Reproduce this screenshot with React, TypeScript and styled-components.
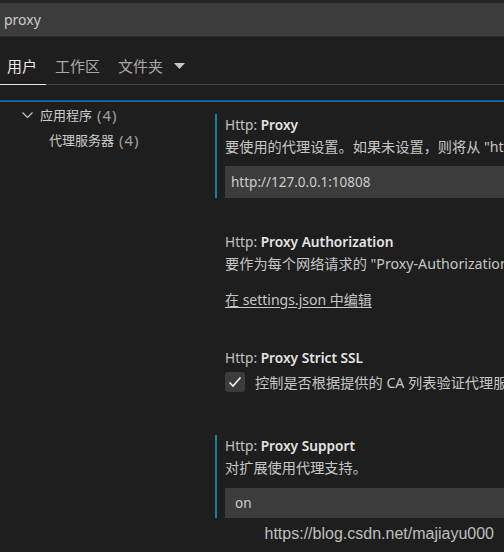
import React from 'react'
import styled, { createGlobalStyle } from 'styled-components'

const GlobalStyle = createGlobalStyle`
  html, body {
    margin: 0;
    padding: 0;
    background: #1e1e1e;
  }
  body {
    font-family: "Noto Sans", "Noto Sans CJK SC", sans-serif;
    color: #cccccc;
    overflow: hidden;
  }
`

const StyledPage = styled.div`
  position: relative;
  width: 504px;
  height: 552px;
  overflow: hidden;
  background: #1e1e1e;
`

const StyledTopStrip = styled.div`
  height: 3px;
  background: #252526;
`

const StyledSearch = styled.div`
  height: 33px;
  display: flex;
  align-items: center;
  padding-left: 4px;
  background: #3c3c3c;
  border-bottom: 1px solid #2a2a2a;
  font-size: 14px;
  color: #cccccc;
`

const StyledTabBar = styled.div`
  height: 47px;
  display: flex;
  align-items: flex-end;
  border-bottom: 1px solid #454545;
`

interface TabProps {
  $active?: boolean;
  $first?: boolean;
}

const StyledTab = styled.div<TabProps>`
  display: flex;
  align-items: center;
  height: 37px;
  padding: 0 9px 0 ${props => (props.$first ? '7px' : '9px')};
  margin-bottom: -1px;
  border-bottom: 1px solid ${props => (props.$active ? '#e7e7e7' : 'transparent')};
  font-size: 15px;
  color: ${props => (props.$active ? '#e7e7e7' : '#a9a9a9')};
`

const StyledCaret = styled.svg`
  margin-left: 11px;
`

const StyledFocusLine = styled.div`
  margin-top: 15px;
  height: 2px;
  background: linear-gradient(#0f4f85, #1c74c2);
`

const StyledBody = styled.div`
  display: flex;
`

const StyledToc = styled.div`
  width: 215px;
  flex-shrink: 0;
`

interface TocRowProps {
  $indent: number;
}

const StyledTocRow = styled.div<TocRowProps>`
  display: flex;
  align-items: center;
  height: 25px;
  padding-left: ${props => props.$indent}px;
  font-size: 13px;
  color: #cccccc;
  white-space: nowrap;
`

const StyledChevron = styled.svg`
  margin-right: 7px;
`

const StyledCount = styled.span`
  margin-left: 5px;
  font-size: 15px;
  letter-spacing: 1px;
  color: #a0a0a0;
`

const StyledList = styled.div`
  flex: 1;
  padding-top: 12px;
  white-space: nowrap;
`

interface ItemProps {
  $modified?: boolean;
  $after: number;
}

const StyledItem = styled.div<ItemProps>`
  padding-left: 8px;
  border-left: 2px solid ${props => (props.$modified ? '#187f95' : 'transparent')};
  margin-bottom: ${props => props.$after}px;
`

const StyledTitle = styled.div`
  height: 22px;
  line-height: 22px;
  font-size: 13.7px;
  color: #c2c2c2;

  b {
    font-weight: 600;
    color: #e4e4e4;
  }
`

const StyledDesc = styled.div`
  height: 22px;
  line-height: 22px;
  font-size: 14.2px;
  color: #c6c6c6;
`

const StyledInput = styled.div`
  margin-top: 9px;
  width: 420px;
  height: 30px;
  display: flex;
  align-items: center;
  padding-left: 6px;
  background: #3c3c3c;
  font-size: 13.5px;
  color: #cccccc;
`

const StyledTextInput = styled(StyledInput)`
  margin-top: 8px;
  height: 32px;
`

const StyledSelect = styled(StyledInput)`
  padding-left: 10px;
`

const StyledLink = styled.div`
  margin-top: 14px;
  height: 22px;
  line-height: 22px;
  font-size: 14px;
  color: #c6c6c6;
  text-decoration: underline;
  text-underline-offset: 2px;
`

const StyledCheckRow = styled.div`
  display: flex;
  align-items: center;
  margin-top: 2px;
  height: 22px;
  font-size: 14.2px;
  color: #c6c6c6;
`

const StyledCheckbox = styled.div`
  width: 20px;
  height: 20px;
  border-radius: 3px;
  background: #3c3c3c;
  display: flex;
  align-items: center;
  justify-content: center;
  margin-right: 10px;
`

const StyledWatermark = styled.div`
  position: absolute;
  right: 10px;
  bottom: 9px;
  font-family: "Liberation Sans", Arial, sans-serif;
  font-size: 16px;
  color: #bfbfbf;
`

const tabs = ['用户', '工作区', '文件夹']

const App = () => {
  return (
    <StyledPage>
      <GlobalStyle />
      <StyledTopStrip />
      <StyledSearch>proxy</StyledSearch>
      <StyledTabBar>
        {tabs.map((tab, i) => (
          <StyledTab key={tab} $active={i === 0} $first={i === 0}>
            {tab}
            {i === 2 && (
              <StyledCaret width="11" height="6" viewBox="0 0 11 6">
                <path d="M0 0 L11 0 L5.5 6 Z" fill="#c5c5c5" />
              </StyledCaret>
            )}
          </StyledTab>
        ))}
      </StyledTabBar>
      <StyledFocusLine />
      <StyledBody>
        <StyledToc>
          <StyledTocRow $indent={22}>
            <StyledChevron width="11" height="8" viewBox="0 0 11 8">
              <path d="M0.5 1.5 L5.5 6.5 L10.5 1.5" fill="none" stroke="#c5c5c5" strokeWidth="1.2" />
            </StyledChevron>
            应用程序<StyledCount>(4)</StyledCount>
          </StyledTocRow>
          <StyledTocRow $indent={49}>
            代理服务器<StyledCount>(4)</StyledCount>
          </StyledTocRow>
        </StyledToc>
        <StyledList>
          <StyledItem $modified $after={33}>
            <StyledTitle>Http: <b>Proxy</b></StyledTitle>
            <StyledDesc>要使用的代理设置。如果未设置，则将从 "http_proxy" 和 "https_proxy" 环境变量中获取。</StyledDesc>
            <StyledTextInput>http://127.0.0.1:10808</StyledTextInput>
          </StyledItem>
          <StyledItem $after={36}>
            <StyledTitle>Http: <b>Proxy Authorization</b></StyledTitle>
            <StyledDesc>要作为每个网络请求的 "Proxy-Authorization" 标头发送的值。</StyledDesc>
            <StyledLink>在 settings.json 中编辑</StyledLink>
          </StyledItem>
          <StyledItem $after={42}>
            <StyledTitle>Http: <b>Proxy Strict SSL</b></StyledTitle>
            <StyledCheckRow>
              <StyledCheckbox>
                <svg width="16" height="16" viewBox="0 0 16 16">
                  <path d="M2.5 8.5 L6 12 L13.5 3.5" fill="none" stroke="#f0f0f0" strokeWidth="1.6" />
                </svg>
              </StyledCheckbox>
              控制是否根据提供的 CA 列表验证代理服务器证书。
            </StyledCheckRow>
          </StyledItem>
          <StyledItem $modified $after={0}>
            <StyledTitle>Http: <b>Proxy Support</b></StyledTitle>
            <StyledDesc>对扩展使用代理支持。</StyledDesc>
            <StyledSelect>on</StyledSelect>
          </StyledItem>
        </StyledList>
      </StyledBody>
      <StyledWatermark>https://blog.csdn.net/majiayu000</StyledWatermark>
    </StyledPage>
  )
}

export default App
